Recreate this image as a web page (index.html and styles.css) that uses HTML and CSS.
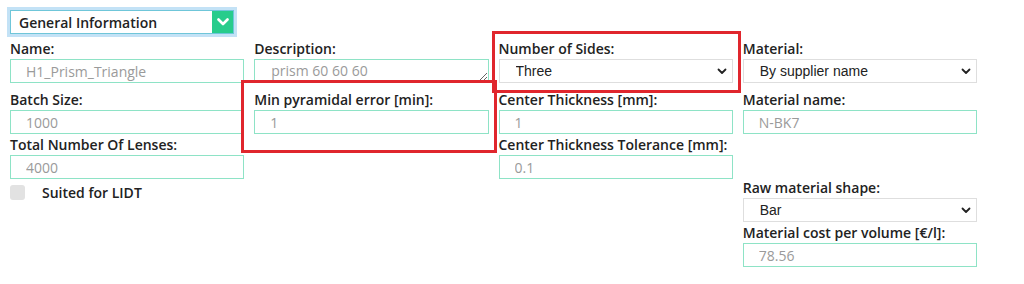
FILE: index.html
```html
<!DOCTYPE html>
<html>
<head>
<meta charset="utf-8">
<link rel="stylesheet" href="styles.css">
</head>
<body>
<div class="page">
  <div class="header">
    <div class="section-select">
      <span class="section-text">General Information</span>
      <span class="section-btn">
        <svg width="12" height="8" viewBox="0 0 12 8"><path d="M1.5 1.5 L6 6 L10.5 1.5" fill="none" stroke="#fff" stroke-width="2.6" stroke-linecap="round" stroke-linejoin="round"/></svg>
      </span>
    </div>
  </div>
  <div class="form">
    <div class="cell first">
      <label class="lbl">Name:</label>
      <input class="inp" value="H1_Prism_Triangle">
    </div>
    <div class="cell first">
      <label class="lbl">Description:</label>
      <textarea class="ta">prism 60 60 60</textarea>
    </div>
    <div class="cell first">
      <label class="lbl">Number of Sides:</label>
      <div class="sel-wrap">
        <select class="sel"><option>Three</option></select>
        <svg class="chev" width="10" height="7" viewBox="0 0 10 7"><path d="M1.5 1.5 L5 5 L8.5 1.5" fill="none" stroke="#222" stroke-width="1.8" stroke-linecap="round" stroke-linejoin="round"/></svg>
      </div>
    </div>
    <div class="cell first">
      <label class="lbl">Material:</label>
      <div class="sel-wrap">
        <select class="sel"><option>By supplier name</option></select>
        <svg class="chev" width="10" height="7" viewBox="0 0 10 7"><path d="M1.5 1.5 L5 5 L8.5 1.5" fill="none" stroke="#222" stroke-width="1.8" stroke-linecap="round" stroke-linejoin="round"/></svg>
      </div>
    </div>

    <div class="cell">
      <label class="lbl">Batch Size:</label>
      <input class="inp" value="1000">
    </div>
    <div class="cell">
      <label class="lbl">Min pyramidal error [min]:</label>
      <input class="inp" value="1">
    </div>
    <div class="cell">
      <label class="lbl">Center Thickness [mm]:</label>
      <input class="inp" value="1">
    </div>
    <div class="cell">
      <label class="lbl">Material name:</label>
      <input class="inp" value="N-BK7">
    </div>

    <div class="cell">
      <label class="lbl">Total Number Of Lenses:</label>
      <input class="inp" value="4000">
    </div>
    <div class="cell"></div>
    <div class="cell">
      <label class="lbl">Center Thickness Tolerance [mm]:</label>
      <input class="inp" value="0.1">
    </div>
    <div class="cell"></div>

    <div class="cell">
      <div class="check-row">
        <span class="check"></span>
        <span class="check-lbl">Suited for LIDT</span>
      </div>
    </div>
    <div class="cell"></div>
    <div class="cell"></div>
    <div class="cell raw">
      <label class="lbl">Raw material shape:</label>
      <div class="sel-wrap">
        <select class="sel"><option>Bar</option></select>
        <svg class="chev" width="10" height="7" viewBox="0 0 10 7"><path d="M1.5 1.5 L5 5 L8.5 1.5" fill="none" stroke="#222" stroke-width="1.8" stroke-linecap="round" stroke-linejoin="round"/></svg>
      </div>
      <label class="lbl">Material cost per volume [€/l]:</label>
      <input class="inp" value="78.56">
    </div>
  </div>
  <div class="mark mark-a"></div>
  <div class="mark mark-b"></div>
</div>
</body>
</html>
```
FILE: styles.css
```css
html, body {
  margin: 0;
  padding: 0;
  background: #fff;
}
body {
  font-family: "Open Sans", "Liberation Sans", sans-serif;
  color: #222;
  width: 1024px;
  height: 284px;
  overflow: hidden;
}
.page {
  position: relative;
  height: 284px;
}
.header {
  padding: 10px 0 0 10px;
  margin-bottom: 4px;
}
.section-select {
  box-sizing: border-box;
  width: 224px;
  height: 24px;
  border: 1px solid #6fc6d9;
  box-shadow: 0 0 0 3px #c3e2f6;
  background: #fff;
  display: flex;
  align-items: center;
  justify-content: space-between;
}
.section-text {
  font-weight: 600;
  font-size: 14px;
  padding-left: 8px;
  color: #222;
}
.section-btn {
  width: 21px;
  height: 22px;
  background: #27cc8c;
  display: flex;
  align-items: center;
  justify-content: center;
}
.form {
  display: grid;
  grid-template-columns: repeat(4, 244.25px);
  margin-left: 5px;
}
.cell {
  padding: 0 5px;
  display: flex;
  flex-direction: column;
}
.cell.first {
  padding-bottom: 6px;
}
.cell.raw {
  margin-top: -2px;
}
.lbl {
  display: block;
  font-weight: 600;
  font-size: 14px;
  line-height: 21px;
  height: 21px;
  color: #222;
  white-space: nowrap;
}
.inp {
  box-sizing: border-box;
  width: 100%;
  height: 24px;
  margin: 0;
  border: 1px solid #8ee3c6;
  padding: 0 0 0 15px;
  font-family: "Open Sans", sans-serif;
  font-size: 14px;
  color: #9a9a9a;
  background: #fff;
  outline: none;
}
.ta {
  box-sizing: border-box;
  width: 100%;
  height: 23px;
  margin: 0;
  border: 1px solid #8ee3c6;
  padding: 1px 0 0 16px;
  font-family: "Open Sans", sans-serif;
  font-size: 14px;
  line-height: 19px;
  color: #9a9a9a;
  resize: both;
  overflow: hidden;
  display: block;
  outline: none;
}
.sel-wrap {
  position: relative;
}
.sel {
  box-sizing: border-box;
  width: 100%;
  height: 24px;
  margin: 0;
  display: block;
  appearance: none;
  -webkit-appearance: none;
  border: 1px solid #dedede;
  border-radius: 0;
  background: #fff;
  padding: 0 0 0 16px;
  font-family: "Liberation Sans", Arial, sans-serif;
  font-size: 14px;
  color: #222;
  outline: none;
}
.chev {
  position: absolute;
  right: 6px;
  top: 9px;
}
.check-row {
  display: flex;
  align-items: center;
  margin-top: 5px;
  height: 17px;
}
.check {
  width: 15px;
  height: 15px;
  border-radius: 3px;
  background: #e2e2e2;
}
.check-lbl {
  margin-left: 17px;
  font-weight: 600;
  font-size: 14px;
  color: #222;
}
.mark {
  position: absolute;
  box-sizing: border-box;
  border: 3px solid #e0262d;
}
.mark-a {
  left: 241px;
  top: 80px;
  width: 256px;
  height: 73px;
}
.mark-b {
  left: 492px;
  top: 31px;
  width: 249px;
  height: 62px;
}
```
